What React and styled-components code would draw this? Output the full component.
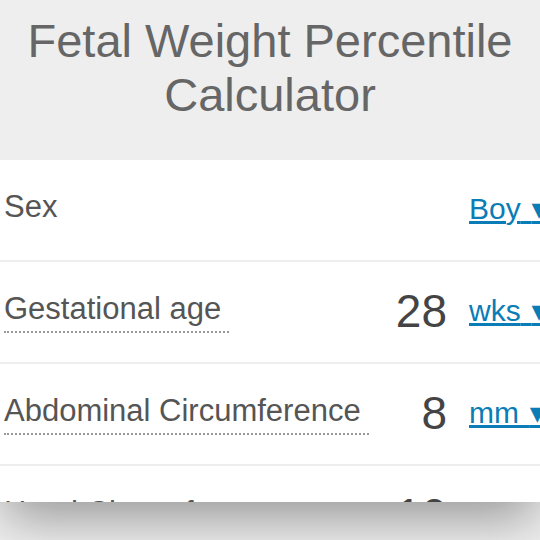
import React from 'react'
import styled, { createGlobalStyle } from 'styled-components'

const rows = [
    { label: 'Sex', unit: 'Boy', plain: true },
    { label: 'Gestational age', value: '28', unit: 'wks' },
    { label: 'Abdominal Circumference', value: '8', unit: 'mm' },
    { label: 'Head Circumference', value: '10', unit: 'mm' },
]

const App = () => {
    return (
        <Page>
            <GlobalStyle />
            <Card>
                <Header>
                    <Title>Fetal Weight Percentile Calculator</Title>
                </Header>
                {rows.map(row => (
                    <Row key={row.label}>
                        <Label $plain={row.plain}>{row.label}</Label>
                        <Controls>
                            {row.value && <Value>{row.value}</Value>}
                            <Unit href="#">
                                {row.unit}{'\u00a0\u200a'}<Arrow>▾</Arrow>
                            </Unit>
                        </Controls>
                    </Row>
                ))}
            </Card>
        </Page>
    )
}
export default App

const GlobalStyle = createGlobalStyle`
    html, body {
        margin: 0;
        padding: 0;
    }
    body {
        font-family: "Liberation Sans", Arial, sans-serif;
        background: #f0f0f0;
    }
`
const Page = styled.div`
    height: 540px;
    overflow: hidden;
    background: #f0f0f0;
`
const Card = styled.div`
    height: 502px;
    overflow: hidden;
    background: #fff;
    box-shadow: 0 20px 50px -4px rgba(0, 0, 0, 0.38);
    position: relative;
    z-index: 1;
`
const Header = styled.div`
    height: 160px;
    box-sizing: border-box;
    padding-top: 14px;
    background: #eee;
`
const Title = styled.h1`
    margin: 0 auto;
    max-width: 510px;
    font-weight: normal;
    font-size: 47px;
    line-height: 54px;
    color: #666;
    text-align: center;
`
const Row = styled.div`
    display: flex;
    align-items: center;
    justify-content: space-between;
    height: 100px;
    padding-left: 4px;
    border-bottom: 2px solid #eee;
`
const Label = styled.span`
    font-size: 31px;
    line-height: 36px;
    color: #555;
    padding: 0 8px 4px 0;
    border-bottom: 2px dotted ${p => (p.$plain ? 'transparent' : '#999')};
    white-space: nowrap;
`
const Controls = styled.div`
    display: flex;
    align-items: center;
    gap: 22px;
    margin-right: -16px;
`
const Value = styled.span`
    font-size: 46px;
    line-height: 1.2;
    color: #444;
`
const Unit = styled.a`
    display: block;
    width: 87px;
    font-size: 30px;
    line-height: 36px;
    padding-bottom: 3px;
    color: #0a7cb6;
    text-decoration: underline;
    white-space: nowrap;
`
const Arrow = styled.span`
    font-family: "DejaVu Sans", sans-serif;
    font-size: 30px;
`
